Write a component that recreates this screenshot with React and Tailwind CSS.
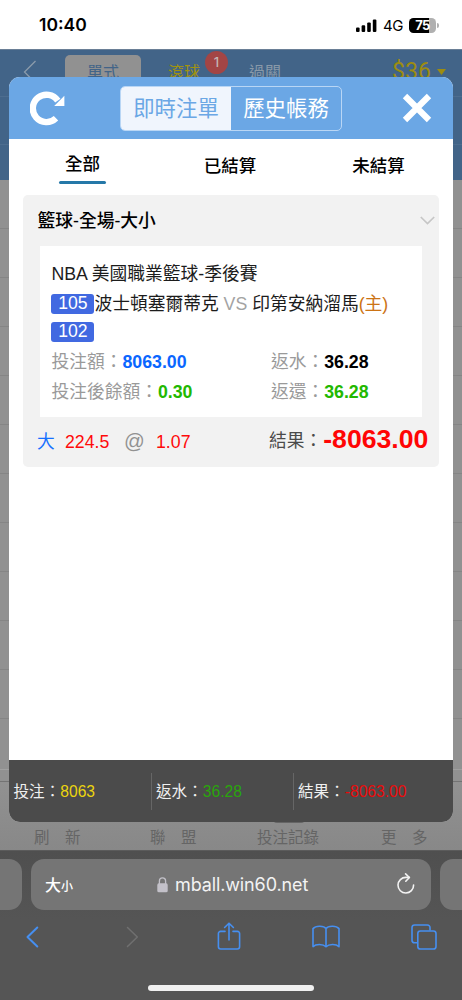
const rows = Array.from({ length: 11 });

const stats = [
  { label: "投注額", value: "8063.00", color: "text-[#0a66ff]" },
  { label: "返水", value: "36.28", color: "text-black" },
  { label: "投注後餘額", value: "0.30", color: "text-[#22b800]" },
  { label: "返還", value: "36.28", color: "text-[#22b800]" },
];

const StatusBar = () => (
  <div className="flex h-[49px] items-center bg-white pt-[2px] pl-[39px] font-['Inter',sans-serif] text-black">
    <span className="w-[317px] text-[17.5px] font-semibold">10:40</span>
    <svg width="21" height="14" viewBox="0 0 21 14" className="shrink-0">
      <rect x="0" y="8.5" width="3.6" height="4.5" rx="1.1" />
      <rect x="5.6" y="6.3" width="3.6" height="6.7" rx="1.1" />
      <rect x="11.2" y="3.5" width="3.6" height="9.5" rx="1.1" />
      <rect x="16.8" y="0.5" width="3.6" height="12.5" rx="1.1" />
    </svg>
    <span className="ml-[6px] w-[26px] text-[15px] leading-none tracking-[-0.4px]">4G</span>
    <div className="flex h-[15px] w-[27px] items-center justify-center rounded-[4.5px] bg-linear-to-r from-black from-75% to-[#b0b0b0] to-75% text-[13px] leading-none font-bold tracking-[-0.6px] text-white">
      75
    </div>
    <div className="ml-[1px] h-[5px] w-[1.5px] rounded-r bg-[#b0b0b0]"></div>
  </div>
);

const PageHeader = () => (
  <div className="h-[131px] border-t border-[#6a7f96] bg-[#426488]">
    <div className="flex h-[47px] items-start border-b border-[#4d6d8f] pt-[5px]">
      <svg width="14" height="24" viewBox="0 0 14 24" fill="none" className="mt-[5px] ml-[23px]" stroke="#8b9bab" strokeWidth="1.3">
        <path d="M12.5 1 L1.5 12 L12.5 23" />
      </svg>
      <div className="ml-[28px] flex h-[34px] w-[76px] items-center justify-center rounded-[5px] bg-[#919191] pt-[2px] text-[16px] text-[#426488]">
        單式
      </div>
      <div className="relative ml-[27px] flex h-[34px] items-center pt-[2px] text-[16px] text-[#a0930f]">
        滾球
        <span className="absolute -top-[4px] left-[37px] flex h-[23px] w-[23px] items-center justify-center rounded-full bg-[#a34545] font-['Inter',sans-serif] text-[13px] font-medium text-[#c4b5b5]">
          1
        </span>
      </div>
      <div className="ml-[49px] flex h-[34px] items-center pt-[2px] text-[16px] text-[#8999a8]">過關</div>
      <div className="ml-[111px] flex h-[34px] items-center font-['Roboto',sans-serif] text-[23px] text-[#9d8c10]">
        $36
      </div>
      <svg width="9" height="6" viewBox="0 0 9 6" className="mt-[14px] ml-[6px]" fill="#9d8c10">
        <path d="M0 0 H9 L4.5 6 Z" />
      </svg>
    </div>
    <div className="h-[48px] border-b border-[#4d6d8f]"></div>
  </div>
);

const PageRows = () => (
  <div className="h-[602px]">
    {rows.map((_, i) => (
      <div key={i} className="h-[49px] border-b border-[#858585]"></div>
    ))}
    <div className="h-[51px] border-b border-[#a0a0a0]"></div>
    <div className="h-[12px] border-b border-[#737373]"></div>
  </div>
);

const PageNav = () => (
  <div className="relative flex h-[68px] items-end bg-linear-to-b from-[#919191] to-[#888888] text-[15.5px] leading-none text-[#656565]">
    <div className="absolute top-[36px] left-[273px] h-[5px] w-[32px] rounded-b bg-[#656565]"></div>
    <span className="flex w-[116px] gap-[15.5px] pb-[5px] pl-[34px]"><i className="not-italic">刷</i><i className="not-italic">新</i></span>
    <span className="flex w-[116px] gap-[15.5px] pb-[5px] pl-[34px]"><i className="not-italic">聯</i><i className="not-italic">盟</i></span>
    <span className="w-[115px] pb-[5px] pl-[25px]">投注記錄</span>
    <span className="flex gap-[15.5px] pb-[5px] pl-[34px]"><i className="not-italic">更</i><i className="not-italic">多</i></span>
  </div>
);

const ModalHeader = () => (
  <div className="flex h-[62px] items-center bg-[#6ba7e5]">
    <svg width="35" height="35" viewBox="0 0 35 35" className="ml-[21px]" fill="none">
      <path d="M26 27.3 A13.7 13.7 0 1 1 27.8 9.6" stroke="#fff" strokeWidth="6.4" />
      <path d="M34.4 4.8 V15 H24.2 Z" fill="#fff" />
    </svg>
    <div className="ml-[55px] flex h-[45px] w-[222px] overflow-hidden rounded-[5px] border border-[#b9d6f5] text-[21.4px]">
      <span className="flex w-[110px] items-center justify-center bg-[#f0f5fd] pt-[2px] text-[#6ba7e5]">即時注單</span>
      <span className="flex w-[110px] items-center justify-center pt-[2px] text-white">歷史帳務</span>
    </div>
    <svg width="30" height="30" viewBox="0 0 30 30" className="ml-[60px]" stroke="#fff" strokeWidth="6.2">
      <path d="M3 3 L27 27 M27 3 L3 27" />
    </svg>
  </div>
);

const Tabs = () => (
  <div className="flex h-[56px] text-[17.5px] leading-none font-medium text-black">
    <div className="flex w-[147px] justify-center pt-[17px]">
      <span className="w-[47px] text-center">
        全部
        <span className="mt-[7px] block h-[3.5px] rounded-full bg-[#2578a8]"></span>
      </span>
    </div>
    <div className="flex w-[148px] justify-center pt-[19px]">已結算</div>
    <div className="flex w-[149px] justify-center pt-[19px]">未結算</div>
  </div>
);

const Badge = ({ children }) => (
  <span className="flex h-[20px] w-[43px] shrink-0 items-center justify-center rounded-[3px] bg-[#4169e1] text-[17.6px] leading-none text-white">
    {children}
  </span>
);

const BetCard = () => (
  <div className="mr-[14px] ml-[14px] h-[272px] rounded-[5px] bg-[#f2f2f2] text-[17.75px] whitespace-nowrap text-[#1c1c1c]">
    <div className="flex h-[51px] items-center justify-between pr-[4px] pl-[14.5px] font-medium text-black">
      <span className="pt-px">籃球-全場-大小</span>
      <svg width="15" height="9" viewBox="0 0 15 9" fill="none" stroke="#c6c6c6" strokeWidth="1.7">
        <path d="M0.8 1 L7.5 7.6 L14.2 1" />
      </svg>
    </div>
    <div className="mx-[17px] h-[171px] bg-white pt-[12px] pl-[11.4px]">
      <div className="flex h-[31px] items-center pt-px">NBA 美國職業籃球-季後賽</div>
      <div className="flex h-[30px] items-center">
        <Badge>105</Badge>
        <span>
          波士頓塞爾蒂克 <span className="text-[#a3a3a3]">VS</span> 印第安納溜馬<span className="text-[#cc7314]">(主)</span>
        </span>
      </div>
      <div className="flex h-[26px] items-center">
        <Badge>102</Badge>
      </div>
      <div className="mt-[2px] grid grid-cols-[219.5px_1fr]">
        {stats.map((s) => (
          <div key={s.label} className="flex h-[30px] items-center text-[#9a9a9a]">
            {s.label}：<b className={s.color}>{s.value}</b>
          </div>
        ))}
      </div>
    </div>
    <div className="flex h-[50px] items-center pl-[14px]">
      <span className="w-[28px] text-[#1670ff]">大</span>
      <span className="w-[59px] text-[#ff0a0a]">224.5</span>
      <span className="-mt-[2px] w-[32px] text-[20.5px] text-[#929292]">@</span>
      <span className="w-[113px] text-[#ff0a0a]">1.07</span>
      <span className="-mt-px text-[#4a4a4a]">結果：</span>
      <b className="-mt-[5px] ml-px text-[26.6px] leading-none text-[#ff0505]">-8063.00</b>
    </div>
  </div>
);

const Totals = () => (
  <div className="mt-auto flex h-[62px] items-center bg-[#4b4b4b] text-[15.6px] whitespace-nowrap text-[#f0f0f0]">
    <div className="flex h-[37px] w-[142px] items-center pt-px pl-[4.5px]">
      投注：<span className="text-[#ecd50e]">8063</span>
    </div>
    <div className="flex h-[37px] w-[142px] items-center border-l border-[#666666] pt-px pl-[4px]">
      返水：<span className="text-[#2aa50c]">36.28</span>
    </div>
    <div className="flex h-[37px] items-center border-l border-[#666666] pt-px pl-[4px]">
      結果：<span className="text-[#ea0a0a]">-8063.00</span>
    </div>
  </div>
);

const BrowserBar = () => (
  <div className="h-[150px] border-t border-[#5b5b5b] bg-[#555555] font-['Inter','Noto_Sans_CJK_TC',sans-serif]">
    <div className="flex h-[68px] gap-[9px] bg-linear-to-b from-[#4f4f4f] to-[#555555] pt-[8px]">
      <div className="h-[51px] w-[22px] shrink-0 rounded-r-[13px] bg-[#757575]"></div>
      <div className="flex h-[51px] w-[400px] shrink-0 items-center rounded-[13px] bg-[#757575] text-white">
        <div className="ml-[14px] flex w-[112px] items-baseline leading-none font-medium">
          <span className="text-[16px]">大</span>
          <span className="text-[12px]">小</span>
        </div>
        <svg width="11" height="16" viewBox="0 0 11 16" fill="none">
          <rect x="0.3" y="6.3" width="10.4" height="9" rx="1.6" fill="#c3c1c9" />
          <path d="M2.4 7 V4 a3.1 3.1 0 0 1 6.2 0 V7" stroke="#c3c1c9" strokeWidth="1.3" />
        </svg>
        <span className="ml-[7px] w-[222px] text-[18px] tracking-[-0.12px] text-[#f3f3f3]">mball.win60.net</span>
        <svg width="18" height="21" viewBox="0 0 18 21" fill="none" stroke="#f3f3f3" strokeWidth="1.6" strokeLinecap="round" strokeLinejoin="round" className="-mt-[2px]">
          <path d="M16.6 12 A7.8 7.8 0 1 1 9 4.4 H12.2" />
          <path d="M8.6 0.9 L12.4 4.5 L8.8 8.2" />
        </svg>
      </div>
      <div className="h-[51px] w-[22px] shrink-0 rounded-l-[13px] bg-[#757575]"></div>
    </div>
    <div className="flex h-[38px] items-center">
      <svg width="13" height="22" viewBox="0 0 13 22" fill="none" stroke="#468ff0" strokeWidth="2" strokeLinecap="round" strokeLinejoin="round" className="-mt-[2px] ml-[26px]">
        <path d="M11.3 1.5 L1.5 11 L11.3 20.5" />
      </svg>
      <svg width="13" height="22" viewBox="0 0 13 22" fill="none" stroke="#707070" strokeWidth="1.5" strokeLinecap="round" strokeLinejoin="round" className="-mt-[2px] ml-[87px]">
        <path d="M1.5 1.5 L11.3 11 L1.5 20.5" />
      </svg>
      <svg width="24" height="28" viewBox="0 0 24 28" fill="none" stroke="#468ff0" strokeWidth="1.6" strokeLinecap="round" strokeLinejoin="round" className="-mt-[4px] ml-[78px]">
        <path d="M8 9.4 H3.6 A2.2 2.2 0 0 0 1.4 11.6 V24.8 A2.2 2.2 0 0 0 3.6 27 H20.4 A2.2 2.2 0 0 0 22.6 24.8 V11.6 A2.2 2.2 0 0 0 20.4 9.4 H16" />
        <path d="M12 18 V1.4 M7.6 5.5 L12 1.2 L16.4 5.5" />
      </svg>
      <svg width="28" height="23" viewBox="0 0 28 23" fill="none" stroke="#468ff0" strokeWidth="1.6" strokeLinecap="round" strokeLinejoin="round" className="-mt-[3px] ml-[71px]">
        <path d="M14 3.5 C12 0.9 4 0.2 1 3.6 V21.6 C4 18.8 11 18.8 14 21.8 C17 18.8 24 18.8 27 21.6 V3.6 C24 0.2 16 0.9 14 3.5 V21.5" />
      </svg>
      <svg width="26" height="26" viewBox="0 0 26 26" fill="none" stroke="#468ff0" strokeWidth="1.6" strokeLinejoin="round" className="-mt-[2px] ml-[71px]">
        <rect x="6.8" y="7" width="18.2" height="18" rx="2.6" />
        <path d="M6.5 18.8 H3.6 A2.6 2.6 0 0 1 1 16.2 V3.6 A2.6 2.6 0 0 1 3.6 1 H16.4 A2.6 2.6 0 0 1 19 3.6 V6.6" />
      </svg>
    </div>
    <div className="mx-auto mt-[28px] h-[6px] w-[166px] rounded-full bg-[#f0f0f0]"></div>
  </div>
);

const App = () => {
  return (
    <div className="relative h-[1000px] w-[462px] overflow-hidden bg-[#919191] font-['Liberation_Sans','Noto_Sans_CJK_TC',sans-serif]">
      <StatusBar />
      <PageHeader />
      <PageRows />
      <PageNav />
      <BrowserBar />

      {/* bet record dialog */}
      <div className="absolute top-[77px] left-[9px] flex h-[745px] w-[444px] flex-col overflow-hidden rounded-[11px] bg-white">
        <ModalHeader />
        <Tabs />
        <BetCard />
        <Totals />
      </div>
    </div>
  );
};

export default App;
